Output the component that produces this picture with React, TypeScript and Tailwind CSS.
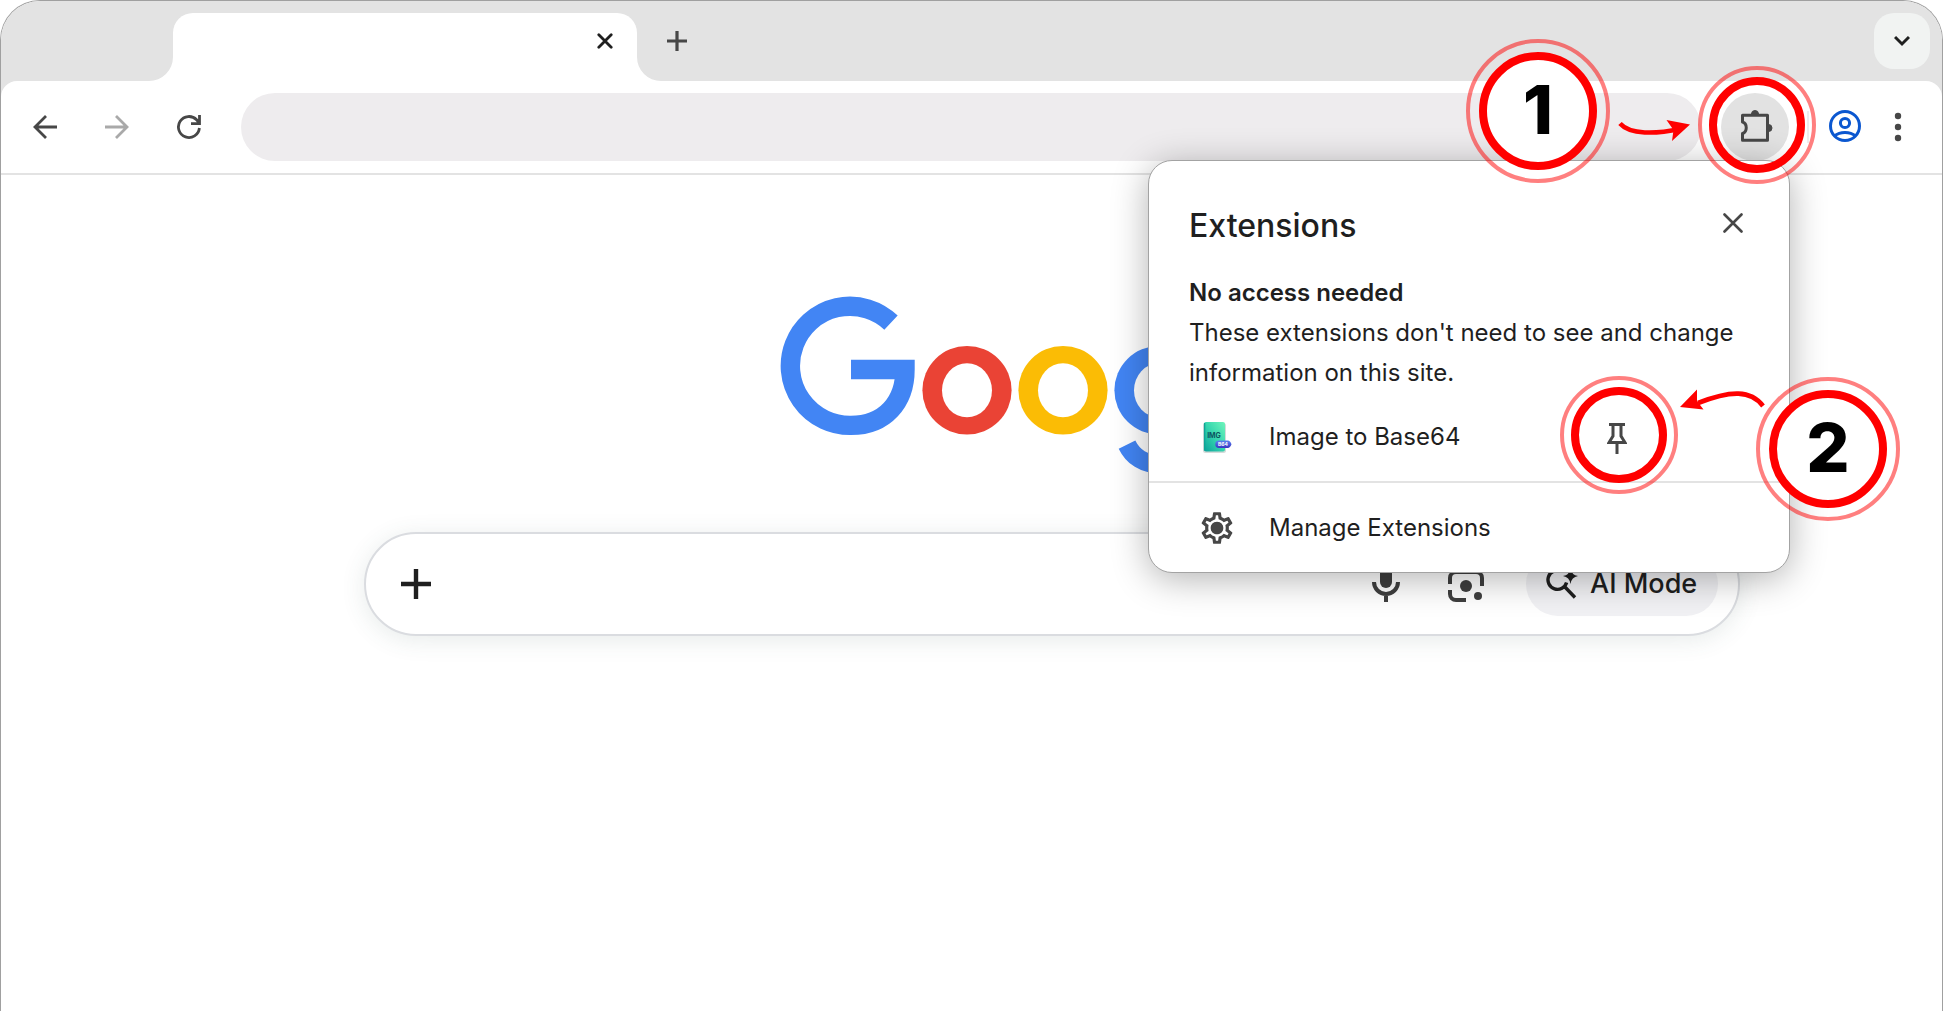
import { ReactNode } from 'react';
import { MdOutlineSettings } from 'react-icons/md';

interface BadgeProps {
  label: string;
  className: string;
}

function StepBadge({ label, className }: BadgeProps) {
  return (
    <div className={`absolute z-20 w-36 h-36 rounded-full border-4 border-[#ff0000]/50 flex items-center justify-center ${className}`}>
      <div className="w-[118px] h-[118px] rounded-full border-8 border-[#ff0000] bg-white flex items-center justify-center pb-1">
        <span className="text-[68px] leading-none font-extrabold text-black">{label}</span>
      </div>
    </div>
  );
}

// Double ring around a button
function Ring({ className }: { className: string }) {
  return (
    <span className={`absolute z-20 w-[118px] h-[118px] rounded-full border-4 border-[#ff0000]/50 p-[7px] pointer-events-none ${className}`}>
      <span className="block w-full h-full rounded-full border-8 border-[#ff0000]" />
    </span>
  );
}

function NavButton({ label, children }: { label: string; children: ReactNode }) {
  return (
    <button aria-label={label} className="w-[72px] h-[68px] shrink-0 flex items-center justify-center">
      {children}
    </button>
  );
}

function TabStrip() {
  return (
    <div className="h-20 pt-3 pr-3 flex items-start">
      <div className="relative ml-[172px] w-[464px] h-[68px] bg-white rounded-t-[20px] flex items-center justify-end pr-6 pb-3">
        {/* Curved feet of the tab */}
        <svg className="absolute bottom-0 -left-6 w-6 h-6" viewBox="0 0 24 24" fill="#fff">
          <path d="M24 0A24 24 0 0 1 0 24H24Z" />
        </svg>
        <svg className="absolute bottom-0 -right-6 w-6 h-6" viewBox="0 0 24 24" fill="#fff">
          <path d="M0 0A24 24 0 0 0 24 24H0Z" />
        </svg>
        <button aria-label="Close tab">
          <svg className="w-4 h-4" viewBox="0 0 16 16" stroke="#1f1f1f" strokeWidth="2.8" strokeLinecap="round">
            <path d="M1.8 1.8L14.2 14.2M14.2 1.8L1.8 14.2" />
          </svg>
        </button>
      </div>
      <button aria-label="New tab" className="ml-[30px] mt-[18px]">
        <svg className="w-5 h-5" viewBox="0 0 20 20" stroke="#474747" strokeWidth="3.2">
          <path d="M10 0V20M0 10H20" />
        </svg>
      </button>
      <button aria-label="Search tabs" className="ml-auto w-14 h-14 rounded-[20px] bg-[#f1f3f2] flex items-center justify-center">
        <svg className="w-4 h-3" viewBox="0 0 16 12" fill="none" stroke="#1f1f1f" strokeWidth="3">
          <path d="M1 2L8 9L15 2" />
        </svg>
      </button>
    </div>
  );
}

function Toolbar() {
  return (
    <div className="h-[94px] pt-3 pl-2 pr-10 bg-white rounded-t-2xl border-b-2 border-[#e3e3e3] flex items-start">
      <NavButton label="Back">
        <svg className="w-6 h-6" viewBox="0 0 24 24" fill="none" stroke="#474747" strokeWidth="2.8">
          <path d="M24 12H2M13 1L2 12L13 23" />
        </svg>
      </NavButton>
      <NavButton label="Forward">
        <svg className="w-6 h-6" viewBox="0 0 24 24" fill="none" stroke="#a9a9a9" strokeWidth="2.8">
          <path d="M0 12H22M11 1L22 12L11 23" />
        </svg>
      </NavButton>
      <NavButton label="Reload">
        <svg className="w-6 h-6" viewBox="0 0 24 24" fill="none" stroke="#474747" strokeWidth="2.8">
          <path d="M22.4 13A10.5 10.5 0 1 1 19.6 4.8L22 7.6M22.5 0V8.6H14" />
        </svg>
      </NavButton>
      <input aria-label="Address" className="ml-4 flex-1 min-w-0 h-[68px] rounded-full bg-[#eeecee] px-8 text-2xl outline-none" />
      <button aria-label="Extensions" className="relative ml-5 w-[68px] h-[68px] pl-1 pb-[2px] shrink-0 rounded-full bg-[#e2e2e2] flex items-center justify-center">
        <svg className="w-8 h-8" viewBox="0 0 32 32" fill="none" stroke="#474747" strokeWidth="3" strokeLinejoin="round">
          <path d="M1.5 12V5.3H26.5V30.3H1.5V23.5C6.5 22 6.5 13.5 1.5 12Z" />
          <path d="M10.5 4a3.5 3.5 0 0 1 7 0ZM27.5 14.5a3.5 3.5 0 0 1 0 7Z" fill="#474747" strokeWidth="1" />
        </svg>
        <Ring className="-left-[23px] -top-[27px]" />
      </button>
      <div className="ml-[18px] mt-[18px] w-[2px] h-8 shrink-0 bg-[#eeecee]" />
      <button aria-label="Profile" className="ml-5 h-[66px] shrink-0">
        <svg className="w-8 h-8" viewBox="0 0 32 32" fill="none" stroke="#0b57d0" strokeWidth="3">
          <circle cx="16" cy="16" r="14.5" />
          <circle cx="16" cy="13" r="4.6" />
          <path d="M5.5 26C11 21.2 21 21.2 26.5 26" />
        </svg>
      </button>
      <button aria-label="Menu" className="ml-[33px] h-[68px] shrink-0">
        <svg className="w-2 h-8" viewBox="0 0 8 32" fill="#474747">
          <circle cx="4" cy="5" r="3.2" />
          <circle cx="4" cy="16" r="3.2" />
          <circle cx="4" cy="27" r="3.2" />
        </svg>
      </button>
    </div>
  );
}

function GoogleLogo() {
  return (
    <svg role="img" aria-label="Google" className="mx-auto w-[544px] h-[184px]" viewBox="0 0 544 184" fill="none">
      <path
        d="M111 31.6A59.6 59.6 0 1 0 71 134.4C105 134.4 125 111 125 78.5H71"
        stroke="#4285f4"
        strokeWidth="19.4"
      />
      <ellipse cx="187" cy="99.3" rx="44.6" ry="44.3" fill="#ea4335" />
      <ellipse cx="187" cy="99.3" rx="25" ry="27" fill="#fff" />
      <ellipse cx="283" cy="99.3" rx="44.6" ry="44.3" fill="#fbbc05" />
      <ellipse cx="283" cy="99.3" rx="25" ry="27" fill="#fff" />
      <ellipse cx="379" cy="99.3" rx="44.6" ry="44.3" fill="#4285f4" />
      <ellipse cx="379" cy="99.3" rx="25" ry="27" fill="#fff" />
      <path d="M347 153.6C353 166 364 173 379 173" stroke="#4285f4" strokeWidth="18.5" />
    </svg>
  );
}

function SearchBox() {
  return (
    <div className="mt-[57px] h-[104px] rounded-full border-2 border-[#dadce0] bg-white shadow-[0_4px_24px_rgba(60,90,80,0.12)] flex items-center pl-[35px] pr-5">
      <button aria-label="Add">
        <svg className="w-[30px] h-[30px]" viewBox="0 0 30 30" stroke="#1f1f1f" strokeWidth="4.4">
          <path d="M15 0V30M0 15H30" />
        </svg>
      </button>
      <input aria-label="Search" className="flex-1 min-w-0 h-full px-6 text-2xl outline-none" />
      <button aria-label="Search by voice" className="mr-12">
        <svg className="w-7 h-9" viewBox="0 0 28 36" fill="none" stroke="#3f3f3f" strokeWidth="4">
          <rect x="8" y="-2" width="12" height="24" rx="6" fill="#3f3f3f" stroke="none" />
          <path d="M2 16A12 12 0 0 0 26 16M14 28V36" />
        </svg>
      </button>
      <button aria-label="Search by image" className="mr-[42px]">
        <svg className="w-9 h-9" viewBox="0 0 36 36" fill="none" stroke="#3f3f3f" strokeWidth="4">
          <path d="M2 18V12A6 6 0 0 1 8 6H28A6 6 0 0 1 34 12V20M2 24V28A6 6 0 0 0 8 34H18" />
          <circle cx="18" cy="20" r="6" fill="#3f3f3f" stroke="none" />
          <circle cx="30" cy="30" r="4" fill="#3f3f3f" stroke="none" />
        </svg>
      </button>
      <button className="w-[192px] h-16 shrink-0 rounded-full bg-[#f1f1f4] flex items-center pl-5 gap-3 text-[27px] font-medium text-[#1f1f1f] whitespace-nowrap">
        <svg className="w-8 h-8 shrink-0" viewBox="0 0 32 32" fill="none" stroke="#1f1f1f" strokeWidth="3.4">
          <path d="M15 3A9.5 9.5 0 1 0 20.6 14.5M18 18L29 29.5" />
          <path d="M24.5 0Q25.5 7 32 8Q25.5 9 24.5 16Q23.5 9 17 8Q23.5 7 24.5 0Z" fill="#1f1f1f" stroke="none" />
        </svg>
        AI Mode
      </button>
    </div>
  );
}

function ExtensionIcon() {
  return (
    <svg className="w-8 h-8" viewBox="0 0 32 32">
      <defs>
        <linearGradient id="card" x1="1" y1="0" x2="0" y2="1">
          <stop offset="0" stopColor="#6ff5bb" />
          <stop offset="0.5" stopColor="#35d5ae" />
          <stop offset="1" stopColor="#0aa19b" />
        </linearGradient>
        <linearGradient id="pill" x1="0" y1="0" x2="0" y2="1">
          <stop offset="0" stopColor="#5b85f0" />
          <stop offset="1" stopColor="#3a35c4" />
        </linearGradient>
      </defs>
      <rect x="2" y="2" width="23" height="30" rx="2.5" fill="#d5dad9" />
      <rect x="3" y="1" width="21" height="29.5" rx="2" fill="url(#card)" />
      <path d="M3.6 2V29.6" stroke="#0fa596" strokeWidth="1.4" />
      <text x="13" y="17" textAnchor="middle" fontSize="7" fontWeight="700" fill="#0c5560" fontFamily="Inter, sans-serif">IMG</text>
      <path d="M18 19.5H27Q29 19.5 30.5 23.2Q29 27 27 27H18A3.7 3.7 0 0 1 18 19.5Z" fill="url(#pill)" />
      <text x="22" y="25.2" textAnchor="middle" fontSize="5" fontWeight="700" fill="#fff" fontFamily="Inter, sans-serif">B64</text>
    </svg>
  );
}

function ExtensionsPopup() {
  return (
    <div className="absolute z-10 top-[159px] right-[152px] w-[642px]">
      <section className="rounded-3xl border border-[#a3a3a3] bg-white shadow-[0_6px_36px_rgba(0,0,0,0.3)] text-2xl text-[#1f1f1f]">
        <div className="px-10 pt-[41px]">
          <div className="h-12 flex items-center justify-between pr-[6px]">
            <h2 className="text-[32px] leading-[48px] font-medium">Extensions</h2>
            <button aria-label="Close">
              <svg className="w-5 h-5 mb-[6px]" viewBox="0 0 20 20" stroke="#474747" strokeWidth="2.6" strokeLinecap="round">
                <path d="M1.5 1.5L18.5 18.5M18.5 1.5L1.5 18.5" />
              </svg>
            </button>
          </div>
          <h3 className="mt-[23px] leading-10 font-semibold">No access needed</h3>
          <p className="leading-10">These extensions don't need to see and change information on this site.</p>
        </div>
        <div className="h-[88px] pl-[52px] pr-[162px] flex items-center">
          <ExtensionIcon />
          <a href="#image-to-base64" className="ml-9">Image to Base64</a>
          <button aria-label="Pin" className="relative mt-1 ml-auto">
            <svg className="w-5 h-8" viewBox="0 0 20 32" fill="none" stroke="#474747" strokeWidth="3">
              <path d="M2 1.5H18M6 1.5V13L2 19.5H18L14 13V1.5M10 20V31" />
            </svg>
            <Ring className="-left-[47px] -top-[47px]" />
          </button>
        </div>
        <div className="h-[91px] pl-[49px] border-t-2 border-[#e3e3e3] flex items-center">
          <span className="relative">
            <MdOutlineSettings className="w-[38px] h-[38px] text-[#474747]" />
            <span className="absolute inset-[13px] rounded-full bg-[#474747]" />
          </span>
          <a href="#manage" className="ml-[33px]">Manage Extensions</a>
        </div>
      </section>

      {/* Steps and arrows */}
      <StepBadge label="1" className="left-[318px] -top-[121px]" />
      <svg className="absolute z-20 left-[470px] -top-[44px] w-20 h-8" viewBox="0 0 80 32" fill="none">
        <path d="M2 7.5C12 19 38 18 62 13" stroke="#f00" strokeWidth="4.6" />
        <path d="M48.5 4L72 8.5L54 25L55.5 14Z" fill="#f00" />
      </svg>
      <StepBadge label="2" className="left-[608px] top-[217px]" />
      <svg className="absolute z-20 left-[530px] top-[225px] w-[90px] h-8" viewBox="0 0 90 32" fill="none">
        <path d="M85 21C73 5 53 5 20 18" stroke="#f00" strokeWidth="4.6" />
        <path d="M2 22L19 4.5L19 16L25.5 24.5Z" fill="#f00" />
      </svg>
    </div>
  );
}

export default function App() {
  return (
    <div className="min-h-screen bg-white pr-[3px] flex font-['Inter',sans-serif]">
      <div className="relative flex-1 min-w-0 border border-b-0 border-[#a0a0a0] rounded-t-[40px] bg-white">
        <header className="bg-[#e3e3e3] rounded-t-[39px]">
          <TabStrip />
          <Toolbar />
        </header>
        <main className="pt-[116px] pl-[363px] pr-[202px]">
          <GoogleLogo />
          <SearchBox />
        </main>
        <ExtensionsPopup />
      </div>
    </div>
  );
}
